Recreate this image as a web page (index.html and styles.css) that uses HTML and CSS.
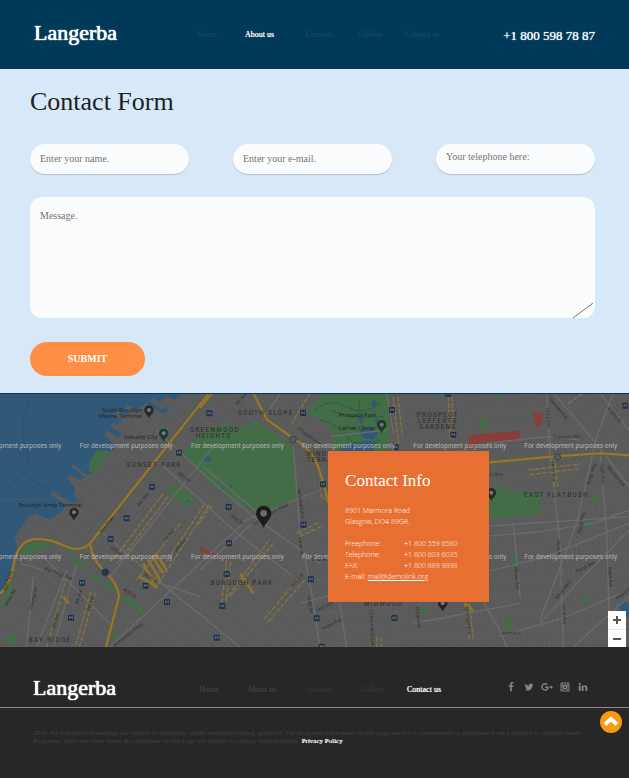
FILE: index.html
```html
<!DOCTYPE html>
<html lang="en">
<head>
<meta charset="utf-8">
<meta name="viewport" content="width=device-width, initial-scale=1">
<title>Langerba - Contact</title>
<link rel="stylesheet" href="styles.css">
</head>
<body>
<header class="bar site-header">
  <a class="logo" href="#">Langerba</a>
  <nav class="nav" aria-label="Main">
    <a href="#">Home</a>
    <a class="current" href="#">About us</a>
    <a href="#">Courses</a>
    <a href="#">Gallery</a>
    <a href="#">Contact us</a>
  </nav>
  <a class="phone" href="tel:+18005987887">+1 800 598 78 87</a>
</header>

<main>
  <section class="contact">
    <h1>Contact Form</h1>
    <form>
      <div class="fields">
        <input class="field" type="text" aria-label="Name" placeholder="Enter your name.">
        <input class="field" type="email" aria-label="E-mail" placeholder="Enter your e-mail.">
        <input class="field field-tel" type="tel" aria-label="Telephone" placeholder="Your telephone here:">
      </div>
      <div class="message">
        <textarea aria-label="Message" placeholder="Message."></textarea>
        <svg class="grip" viewBox="0 0 20 15" aria-hidden="true"><path d="M0 15 20 0"/></svg>
      </div>
      <button class="submit" type="submit">SUBMIT</button>
    </form>
  </section>

  <section class="map" aria-label="Map">
    <svg class="map-art" viewBox="0 12 1887 759">
      <defs>
        <pattern id="grid-west" width="16" height="44" patternUnits="userSpaceOnUse" patternTransform="rotate(38)">
          <path d="M0 0V44M0 0H16" class="street"/>
        </pattern>
        <pattern id="grid-east" width="15" height="50" patternUnits="userSpaceOnUse" patternTransform="rotate(-5)">
          <path d="M0 0V50M0 0H15" class="street"/>
        </pattern>
        <pattern id="grid-diag" width="16" height="46" patternUnits="userSpaceOnUse" patternTransform="rotate(-38)">
          <path d="M0 0V46M0 0H16" class="street"/>
        </pattern>
        <g id="stop"><rect x="-9" y="-9" width="18" height="18" rx="3" fill="#1f3048"/><path d="M-4 4V-4L0 1 4-4V4" fill="none" stroke="#7d8794" stroke-width="2"/></g>
        <g id="pin"><path d="M0 20C-4 8-14 4-14-6a14 14 0 0 1 28 0C14 4 4 8 0 20Z"/><circle cy="-6" r="6" fill="#777"/></g>
      </defs>
      <rect y="9" width="1887" height="762" fill="#5a5a5a"/>
      <path d="M0 9H860L940 420 960 771H0Z" fill="url(#grid-west)"/>
      <path d="M860 9H1660L1740 300 1660 771H960L940 420Z" fill="url(#grid-east)"/>
      <path d="M1630 9H1887V460L1740 300Z" fill="url(#grid-diag)"/>
      <path d="M1740 300 1887 460V771H1640Z" fill="url(#grid-east)"/>

      <path class="water" d="M0 9H545L525 30 500 18 480 36 505 60 490 72 455 48 440 40 390 70 350 104 372 122 356 142 318 120 312 134 350 170 330 186 290 184 264 222 280 246 262 256 218 222 214 228 254 262 236 270 216 256 200 264 224 292 222 322 244 330 214 338 156 304 152 314 198 344 184 366 150 388 108 372 84 382 44 440 52 470 36 540 14 600 0 622Z"/>
      <g class="pier">
        <path d="M352 62 398 92 386 104 342 74ZM384 44 440 84 428 96 374 58ZM458 22 496 48 488 60 448 34ZM340 96 372 118 362 130 330 108Z"/>
      </g>
      <path class="ripple" d="M90 30Q50 120 80 180T10 300M70 250Q120 290 150 300"/>

      <g class="park">
        <path d="M272 210 290 180 332 184 300 230 282 250 264 242Z"/>
        <path d="M64 490 80 462 120 454 155 462 120 482 74 496Z"/>
        <path d="M0 655 28 568 38 600 22 640Z"/>
        <path d="M504 310 520 280 586 322 564 358Z"/>
        <path d="M550 188 610 120 680 100 700 116 770 96 880 172 892 326 840 346 795 385 640 288Z"/>
        <path d="M918 68 970 9H1170V140L1158 200H1002L1000 140 980 100Z"/>
        <path d="M1440 300 1510 290 1540 306 1620 312 1618 374 1450 386Z"/>
        <path d="M376 616 446 670 436 680 372 634ZM270 548 350 594 346 606 280 568ZM202 480 262 530 256 538 222 516ZM16 736 54 734 50 762 14 754ZM340 724 362 746 344 762 334 750Z"/>
        <path d="M1438 84 1456 82 1462 122 1444 120ZM1764 390 1776 396 1770 426 1762 418ZM1776 320 1800 316 1796 338 1776 336ZM1538 496 1550 500 1548 536 1536 530ZM1752 616 1764 614 1762 646 1752 642ZM1520 686 1534 684 1532 724 1520 722ZM1266 652 1290 650 1286 668 1266 666ZM1486 20 1510 20 1508 32 1488 32Z"/>
      </g>
      <path class="ripple-dark" d="M945 60Q990 20 1040 50T1140 40M960 90Q1010 100 1040 140T1140 150M1080 30Q1060 90 1110 130M990 60Q1050 90 1150 80"/>
      <g class="pond">
        <path d="M610 200 622 194 636 206 628 216 614 212ZM664 290 674 294 668 300ZM684 288 696 286 694 294ZM556 330 568 328 564 340Z"/>
        <path d="M1078 72 1090 76 1086 100 1076 90ZM1112 38 1124 30 1132 46 1122 56ZM1080 122 1110 114 1136 124 1122 150 1100 146 1084 138ZM1018 172 1050 164 1100 150 1130 160 1120 184 1080 196 1020 190ZM1124 84 1138 90 1130 104Z"/>
        <path d="M1856 648 1876 636 1887 642V680L1866 672Z"/>
      </g>
      <path d="M1406 136 1558 122 1562 146 1440 158 1406 176Z" fill="#8c3d3a"/>
      <path d="M1604 70 1628 68 1624 104 1612 112 1602 92Z" fill="#8c3d3a"/>
      <path d="M600 470 650 494 644 502 600 482Z" fill="#8c3d3a"/>

      <g class="road">
        <path d="M330 560 480 370 640 170M200 540 110 771M470 120 620 260 760 380 960 520M60 520 200 560M300 420 460 560 620 690 720 771M480 220 700 420 880 560M130 500 330 700M610 230 800 390M330 771 600 520 740 390 960 300"/>
        <path d="M100 560 80 771M230 520 160 771M420 560 600 620M840 9 790 90M780 380 600 540"/>
        <path d="M880 170 900 420 940 640 960 771M990 140 1160 120M1020 640 1040 771M900 640 1200 560M1160 9 1180 130M960 320 1010 290"/>
        <path d="M1640 9 1650 200 1680 460 1690 771M1460 160 1640 140 1740 150M1540 400 1560 620M1442 440 1620 425 1780 400 1887 360M1442 550 1640 500 1887 400M1440 410 1887 380M1440 620 1500 720 1520 771M1620 700 1750 560 1887 420M1660 9 1780 150 1887 290M1800 9 1887 120M1840 9 1790 140 1730 400 1620 690M1800 190 1820 420 1830 771M1500 740 1700 680 1887 600M1240 700 1560 640M1720 771 1887 620"/>
      </g>

      <g class="dashes">
        <path d="M490 310 340 510M504 320 352 522M540 400 410 570M627 345 470 590M612 345 456 580M200 560 140 771M286 610 238 771M272 606 226 771M820 460 690 620M806 452 676 630M900 560 790 690M914 570 800 700M680 510 665 640M692 516 678 634M890 430 960 396M900 440 970 406M636 345 590 410M930 9 870 110"/>
        <path d="M1586 240 1742 222M1590 254 1742 236M1652 200 1664 290M1662 200 1674 290M1194 20 1208 140M1180 20 1196 160M1346 20 1350 150M1356 20 1360 150M1406 620 1420 750M1392 620 1408 750M1704 40 1750 9M960 250 964 324 986 326M1130 740V771M1144 740V771"/>
      </g>
      <path class="yellow-block" d="M430 520 470 594M444 508 480 570M456 498 490 550M468 490 500 540M416 560 470 590M190 620 206 640M720 550 760 610M1394 640 1420 662"/>

      <g class="highway-edge">
        <path d="M625 12 270 460Q276 510 315 545T357 620L318 771M270 460Q240 490 190 466T100 448Q54 456 42 520T0 612"/>
        <path d="M760 9 800 88 880 145Q930 176 946 210T986 340M1440 220 1650 200 1800 190 1887 196M600 54 636 9"/>
      </g>
      <g class="highway">
        <path d="M625 12 270 460Q276 510 315 545T357 620L318 771M270 460Q240 490 190 466T100 448Q54 456 42 520T0 612"/>
        <path d="M760 9 800 88 880 145Q930 176 946 210T986 340M1440 220 1650 200 1800 190 1887 196M600 54 636 9"/>
      </g>
      <g class="shield"><circle cx="879" cy="148" r="10"/><circle cx="1672" cy="201" r="10"/><circle cx="316" cy="547" r="11" fill="#26364c"/></g>

      <g>
        <use href="#stop" x="628" y="70"/><use href="#stop" x="537" y="188"/><use href="#stop" x="456" y="291"/><use href="#stop" x="380" y="385"/><use href="#stop" x="332" y="447"/><use href="#stop" x="246" y="579"/><use href="#stop" x="213" y="683"/><use href="#stop" x="437" y="587"/><use href="#stop" x="501" y="636"/>
        <use href="#stop" x="909" y="69"/><use href="#stop" x="686" y="351"/><use href="#stop" x="687" y="460"/><use href="#stop" x="680" y="552"/><use href="#stop" x="667" y="648"/><use href="#stop" x="650" y="743"/><use href="#stop" x="910" y="404"/><use href="#stop" x="969" y="283"/><use href="#stop" x="933" y="568"/><use href="#stop" x="950" y="685"/><use href="#stop" x="1183" y="684"/><use href="#stop" x="1176" y="60"/><use href="#stop" x="1187" y="172"/><use href="#stop" x="1360" y="134"/><use href="#stop" x="1876" y="47"/><use href="#stop" x="965" y="770"/><use href="#stop" x="1344" y="12"/>
      </g>
      <g fill="#272727">
        <use href="#pin" x="447" y="66"/><use href="#pin" x="491" y="136" fill="#173c3c"/><use href="#pin" x="222" y="373"/><use href="#pin" x="1145" y="110" fill="#1c3a28"/><use href="#pin" x="1474" y="314"/><use href="#pin" x="1328" y="646"/>
      </g>

      <g class="place">
        <text x="306" y="66">South Brooklyn</text><text x="296" y="84">Marine Terminal</text>
        <text x="372" y="146">Industry City</text><text x="56" y="350">Brooklyn Army Terminal</text>
        <text x="1016" y="80">Prospect Park</text><text x="1016" y="119">LeFrak Center</text>
      </g>
      <g class="area">
        <text x="380" y="230">SUNSET PARK</text><text x="86" y="757">BAY RIDGE</text>
        <text x="569" y="127">GREENWOOD</text><text x="588" y="145">HEIGHTS</text>
        <text x="714" y="74">SOUTH SLOPE</text><text x="918" y="197">WINDSOR</text><text x="920" y="216">TERRACE</text>
        <text x="632" y="584">BOROUGH PARK</text><text x="936" y="514">KENSINGTON</text><text x="1092" y="649">MIDWOOD</text>
        <text x="1250" y="82">PROSPECT</text><text x="1254" y="100">LEFFERTS</text><text x="1257" y="118">GARDENS</text>
        <text x="1572" y="321">EAST FLATBUSH</text>
      </g>
      <g class="road-name">
        <text transform="translate(306 430) rotate(-52)">Belt Pkwy</text>
        <text transform="translate(18 602) rotate(-72)">Belt Pkwy</text>
        <text transform="translate(418 350) rotate(-52)">4th Ave</text>
        <text transform="translate(496 458) rotate(-52)">7th Ave</text>
        <text transform="translate(530 486) rotate(-52)">8th Ave</text>
        <text transform="translate(530 252) rotate(36)">39th St</text>
        <text transform="translate(132 540) rotate(20)">Bay Ridge Ave</text>
        <text transform="translate(96 660) rotate(-76)">Colonial Rd</text>
        <text transform="translate(20 650) rotate(-60)">Shore Rd</text>
        <text transform="translate(234 644) rotate(-74)">4th Ave</text>
        <text transform="translate(270 664) rotate(-74)">5th Ave</text>
        <text transform="translate(164 716) rotate(-74)">3rd Ave</text>
        <text transform="translate(432 556) rotate(36)">60th St</text>
        <text transform="translate(332 476) rotate(36)">62nd St</text>
        <text transform="translate(368 600) rotate(36)">86th St</text>
        <text transform="translate(344 771) rotate(-38)">Ft Hamilton Pkwy</text>
        <text transform="translate(712 48) rotate(-50)">5th Ave</text>
        <text transform="translate(892 118) rotate(36)">Prospect Ave</text>
        <text transform="translate(760 406) rotate(-30)">Fort Hamilton Pkwy</text>
        <text transform="translate(892 298) rotate(82)">McDonald Ave</text>
        <text transform="translate(896 440) rotate(84)">Dahill Rd</text>
        <text transform="translate(922 616) rotate(84)">Dahill Rd</text>
        <text transform="translate(690 380) rotate(36)">39th St</text>
        <text transform="translate(876 596) rotate(-50)">16th Ave</text>
        <text transform="translate(950 668) rotate(-28)">18th Ave</text>
        <text transform="translate(968 722) rotate(-28)">Foster Ave</text>
        <text transform="translate(1110 660) rotate(88)">Coney Island Ave</text>
        <text transform="translate(1638 55) rotate(86)">Utica Ave</text>
        <text transform="translate(1652 216) rotate(86)">Utica Ave</text>
        <text transform="translate(1670 450) rotate(86)">Utica Ave</text>
        <text transform="translate(1686 644) rotate(86)">Utica Ave</text>
        <text transform="translate(1648 30) rotate(50)">Remsen Ave</text>
        <text transform="translate(1822 56) rotate(50)">E 98th St</text>
        <text transform="translate(1820 232) rotate(50)">Remsen Ave</text>
        <text transform="translate(1660 147) rotate(-3)">Clarkson Ave</text>
        <text transform="translate(1436 260) rotate(-3)">Church Ave</text>
        <text transform="translate(1768 284) rotate(-72)">Kings Hwy</text>
        <text transform="translate(1742 430) rotate(-78)">Kings Hwy</text>
        <text transform="translate(1672 628) rotate(-52)">Kings Hwy</text>
        <text transform="translate(1800 220) rotate(86)">Ralph Ave</text>
        <text transform="translate(1824 530) rotate(86)">Ralph Ave</text>
        <text transform="translate(1730 550) rotate(-28)">Troop Ave</text>
        <text transform="translate(1544 530) rotate(86)">Albany Ave</text>
        <text transform="translate(1394 650) rotate(84)">Nostrand Ave</text>
        <text transform="translate(1504 735) rotate(-3)">Avenue J</text>
        <text transform="translate(1246 650) rotate(84)">Ocean Ave</text>
        <text transform="translate(1852 630) rotate(-38)">Flatlands</text>
      </g>
      <path class="tiles" d="M0 328H1887M0 664H1887M770 9V771"/>
      <g class="watermark">
        <text x="-95" y="173">For development purposes only</text><text x="239" y="173">For development purposes only</text><text x="573" y="173">For development purposes only</text><text x="906" y="173">For development purposes only</text><text x="1240" y="173">For development purposes only</text><text x="1573" y="173">For development purposes only</text>
        <text x="-95" y="506">For development purposes only</text><text x="239" y="506">For development purposes only</text><text x="573" y="506">For development purposes only</text><text x="906" y="506">For development purposes only</text><text x="1240" y="506">For development purposes only</text><text x="1573" y="506">For development purposes only</text>
      </g>
      <path d="M791 414C785 396 768 388 768 370a23 23 0 0 1 46 0C814 388 797 396 791 414Z" fill="#1c1c1c"/>
      <circle cx="791" cy="370" r="10" fill="#6d6d6d"/>
    </svg>

    <aside class="card">
      <h2>Contact Info</h2>
      <address>
        8901 Marmora Road<br>Glasgow, DO4 89GR.
        <dl>
          <dt>Freephone:</dt><dd>+1 800 559 6580</dd>
          <dt>Telephone:</dt><dd>+1 800 603 6035</dd>
          <dt>FAX:</dt><dd>+1 800 889 9898</dd>
        </dl>
        E-mail: <a href="mailto:mail@demolink.org">mail@demolink.org</a>
      </address>
    </aside>

    <div class="zoom">
      <button type="button" aria-label="Zoom in"><svg viewBox="0 0 10 10"><path d="M1 5H9M5 1V9"/></svg></button>
      <button type="button" aria-label="Zoom out"><svg viewBox="0 0 10 10"><path d="M1 5H9"/></svg></button>
    </div>
  </section>
</main>

<footer class="site-footer">
  <div class="bar footer-bar">
    <a class="logo" href="#">Langerba</a>
    <nav class="nav" aria-label="Footer">
      <a class="lit" href="#">Home</a>
      <a class="lit" href="#">About us</a>
      <a href="#">Courses</a>
      <a href="#">Gallery</a>
      <a class="current" href="#">Contact us</a>
    </nav>
    <div class="social">
      <a href="#" aria-label="Facebook"><svg viewBox="0 0 1792 1792"><path d="M1343 12v264h-157q-86 0-116 36t-30 108v189h293l-39 296h-254v759h-306v-759h-255v-296h255v-218q0-186 104-288.500t277-102.500q147 0 228 12z"/></svg></a>
      <a href="#" aria-label="Twitter"><svg viewBox="0 0 1792 1792"><path d="M1684 408q-67 98-162 167 1 14 1 42 0 130-38 259.500t-115.500 248.500-184.500 210.500-258 146-323 54.500q-271 0-496-145 35 4 78 4 225 0 401-138-105-2-188-64.500t-114-159.500q33 5 61 5 43 0 85-11-112-23-185.500-111.500t-73.500-205.500v-4q68 38 146 41-66-44-105-115t-39-154q0-88 44-163 121 149 294.500 238.500t371.500 99.500q-8-38-8-74 0-134 94.500-228.500t228.500-94.500q140 0 236 102 109-21 205-78-37 115-142 178 93-10 186-50z"/></svg></a>
      <a href="#" aria-label="Google Plus"><svg viewBox="0 0 26 20"><path class="line" d="M13.500 5A6.800 6.800 0 1 0 15.500 10.500H9M22 7.500V13.500M19 10.500H25"/></svg></a>
      <a href="#" aria-label="Instagram"><svg viewBox="0 0 20 20"><path class="thin" d="M2 2H18V18H2ZM2 8H6M14 8H18M14 4.500H16"/><circle class="line" cx="10" cy="10" r="3.500"/><path class="thin" d="M4 4 7 7M4 16 7 13M16 16 13 13"/></svg></a>
      <a href="#" aria-label="LinkedIn"><svg viewBox="0 0 1792 1792"><path d="M477 625v991h-330v-991h330zm21-306q1 73-50.500 122t-135.500 49h-2q-82 0-132-49t-50-122q0-74 51.500-122.500t134.500-48.500 133 48.500 51 122.500zm1166 729v568h-329v-530q0-105-40.500-164.500t-126.500-59.500q-63 0-105.500 34.500t-63.500 85.500q-11 30-11 81v553h-329q2-399 2-647t-1-296l-1-48h329v144h-2q20-32 41-56t56.500-52 87-43.500 114.500-15.500q171 0 275 113.500t104 332.500z"/></svg></a>
    </div>
  </div>
  <p class="legal">2016. All Langerba financings are subject to eligibility, credit and underwriting approval. The programs advertised on this page are not a commitment or guarantee from Langerba to provide funds.<br>Programs, rates and other terms &amp; conditions on this page are subject to change without notice. <a href="#">Privacy Policy</a></p>
  <a class="to-top" href="#" aria-label="Back to top"><svg viewBox="0 0 22 22"><path d="M5 13.500 11 8 17 13.500"/></svg></a>
</footer>
</body>
</html>
```

FILE: styles.css
```css
* { box-sizing: border-box; }

body {
  margin: 0;
  background: #272727;
  font-family: "Liberation Serif", serif;
}

a { color: inherit; text-decoration: none; }

/* Header and footer bars */
.bar {
  display: grid;
  grid-template-columns: 163px 246px 1fr;
  align-items: center;
  padding: 0 34px;
}

.site-header {
  height: 69px;
  background: #013a58;
  color: #fff;
}

.logo {
  padding-bottom: 4px;
  color: #fff;
  font-size: 22px;
  line-height: 26px;
  text-shadow: 0 0 1px #fff, 0 0 1px #fff;
}

.nav {
  display: grid;
  grid-template-columns: 48fr 61fr 53fr 46fr 38fr;
  color: #14506f;
  font-size: 8px;
  line-height: 10px;
  white-space: nowrap;
}

.nav .current {
  color: #fff;
  text-shadow: 0 0 1px #fff;
}

.phone {
  justify-self: end;
  padding-top: 2px;
  font-size: 13px;
  line-height: 16px;
  font-variant-numeric: oldstyle-nums;
  text-shadow: 0 0 1px #fff;
  white-space: nowrap;
}

/* Contact form */
.contact {
  padding: 18px 34px 17px 30px;
  background: #d7e8f8;
}

h1 {
  margin: 0 0 27px;
  color: #1c2227;
  font-size: 26px;
  font-weight: 400;
  line-height: 30px;
}

.fields {
  display: grid;
  grid-template-columns: repeat(3, 1fr);
  gap: 44px;
  margin-bottom: 23px;
}

.field,
textarea {
  display: block;
  width: 100%;
  border: 0;
  outline: 0;
  background: #fbfcfe;
  color: #333;
  font: 10px/14px "Liberation Serif", serif;
}

.field {
  height: 30px;
  padding: 0 10px 2px;
  border-radius: 15px;
  box-shadow: 0 1px 1px #b9c0c8;
}

.field-tel { padding-bottom: 6px; }

.field::placeholder,
textarea::placeholder { color: #757575; opacity: 1; }

.message { position: relative; margin-bottom: 24px; }

textarea {
  height: 121px;
  padding: 12px 10px;
  border-radius: 12px;
  resize: none;
}

.grip {
  position: absolute;
  right: 2px;
  bottom: 0;
  width: 20px;
  height: 15px;
  fill: none;
  stroke: #777;
}

.submit {
  display: block;
  width: 115px;
  height: 34px;
  border: 0;
  border-radius: 17px;
  background: #fe8f45;
  color: #fff;
  font: 700 10px/14px "Liberation Serif", serif;
}

/* Map */
.map { position: relative; border-top: 1px solid #013a58; }

.map-art { display: block; width: 100%; height: auto; }

.street { fill: none; stroke: #636363; stroke-width: 2; }
.water, .pond { fill: #2f5879; }
.pier { fill: #555d63; }
.ripple { fill: none; stroke: #2a5170; stroke-width: 3; }
.ripple-dark { fill: none; stroke: #335b39; stroke-width: 3; }
.park { fill: #436d47; }
.road { fill: none; stroke: #6b6b6b; stroke-width: 4; }
.dashes { fill: none; stroke: #857540; stroke-width: 4; stroke-dasharray: 14 5; }
.yellow-block { fill: none; stroke: #8e742c; stroke-width: 8; }
.highway-edge { fill: none; stroke: #6f5f30; stroke-width: 10; }
.highway { fill: none; stroke: #927a30; stroke-width: 6; }
.shield { fill: #5a5a5a; stroke: #3a414b; stroke-width: 3; }
.tiles { fill: none; stroke: #666; stroke-width: 1; }

.place, .area, .road-name, .watermark { font-family: Roboto, sans-serif; }
.place { fill: #282828; font-size: 18px; }
.area { fill: #2b2b2b; font-size: 19px; letter-spacing: 4px; }
.road-name { fill: #303030; font-size: 14px; }
.watermark { fill: #b4b4b4; font-size: 20px; }

.card {
  position: absolute;
  top: 57px;
  left: calc(52% + 1px);
  width: 161px;
  height: 151px;
  padding: 20px 17px;
  background: #e86f32;
  color: #fff;
}

.card h2 {
  margin: 0 0 14px;
  font-size: 17px;
  font-weight: 400;
  line-height: 20px;
}

.card address {
  font: 300 7px/11px "Open Sans", sans-serif;
}

.card dl {
  display: grid;
  grid-template-columns: 59px 1fr;
  margin: 11px 0 0;
}

.card dd { margin: 0; }
.card a { text-decoration: underline; }

.zoom {
  position: absolute;
  right: 3px;
  bottom: 0;
  width: 18px;
  background: #fff;
}

.zoom button {
  display: grid;
  place-items: center;
  width: 100%;
  height: 18px;
  padding: 0;
  border: 0;
  background: none;
}

.zoom button + button { border-top: 1px solid #e6e6e6; }

.zoom svg {
  width: 10px;
  height: 10px;
  stroke: #555;
  stroke-width: 2;
}

/* Footer */
.site-footer {
  position: relative;
  min-height: 131px;
  background: #272727;
}

.footer-bar {
  grid-template-columns: 166px 246px 1fr;
  height: 61px;
  padding: 26px 33px 0;
  border-bottom: 1px solid #8b8e8b;
}

.footer-bar .nav { color: #3a3a3a; }
.footer-bar .nav .lit { color: #4b4b4b; }
.footer-bar .nav .current { color: #fff; }

.social {
  display: flex;
  gap: 6px;
  justify-self: end;
  margin: 0 7px 6px 0;
}

.social svg {
  display: block;
  width: 12px;
  height: 10px;
  fill: #858585;
}

.social .line, .social .thin { fill: none; stroke: #858585; stroke-width: 3; }
.social .thin { stroke-width: 2; }

.legal {
  margin: 21px 33px 0;
  color: #424242;
  font-size: 7px;
  line-height: 8px;
}

.legal a { color: #fff; text-shadow: 0 0 1px #fff; }

.to-top {
  position: absolute;
  top: 64px;
  right: 7px;
  width: 22px;
  height: 22px;
  border-radius: 50%;
  background: #f79a0c;
}

.to-top svg {
  display: block;
  fill: none;
  stroke: #fff;
  stroke-width: 4;
}
```
